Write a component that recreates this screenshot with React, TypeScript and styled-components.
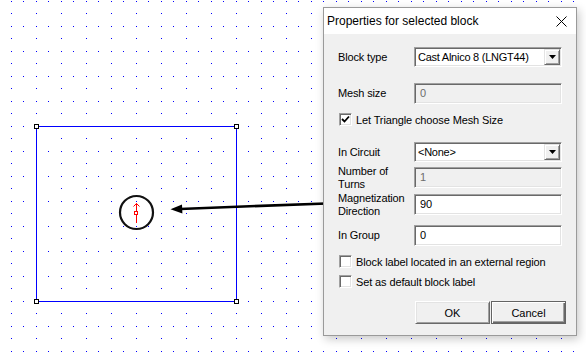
import React from 'react';
import styled, { createGlobalStyle, css } from 'styled-components';

const GlobalStyle = createGlobalStyle`
  html, body {
    margin: 0;
    padding: 0;
    background: #ffffff;
  }
`;

const uiFont = `"Liberation Sans", Arial, sans-serif`;

const Stage = styled.div`
  position: relative;
  width: 586px;
  height: 352px;
  overflow: hidden;
  background: #ffffff;
`;

const Board = styled.svg`
  display: block;
`;

const Dialog = styled.div`
  position: absolute;
  left: 323px;
  top: 7px;
  width: 254px;
  height: 329px;
  box-sizing: border-box;
  border: 1px solid #9a9a9a;
  background: #f0f0f0;
  box-shadow: 2px 3px 9px rgba(0, 0, 0, 0.22);
  display: flex;
  flex-direction: column;
  font-family: ${uiFont};
  color: #000;
`;

const TitleBar = styled.div`
  height: 26px;
  background: #ffffff;
  display: flex;
  align-items: center;
  justify-content: space-between;
  padding-left: 3px;
`;

const TitleText = styled.span`
  font-size: 12px;
`;

const CloseBox = styled.div`
  width: 30px;
  height: 26px;
  display: flex;
  align-items: center;
  justify-content: center;
`;

const Body = styled.div`
  display: flex;
  flex-direction: column;
  padding-left: 14px;
  font-size: 11px;
`;

const FieldRow = styled.div<{ $gap: number; $h: number }>`
  display: flex;
  align-items: center;
  margin-top: ${(p) => p.$gap}px;
  height: ${(p) => p.$h}px;
`;

const FieldLabel = styled.div`
  width: 76px;
  flex: none;
  line-height: 13px;
  letter-spacing: -0.15px;
`;

const sunken = css`
  box-sizing: border-box;
  border: 1px solid;
  border-color: #a0a0a0 #ffffff #ffffff #a0a0a0;
  box-shadow: inset 1px 1px #696969, inset -1px -1px #e3e3e3;
`;

const EditBox = styled.div<{ $disabled?: boolean }>`
  ${sunken};
  width: 148px;
  height: 21px;
  padding-left: 5px;
  line-height: 18px;
  background: ${(p) => (p.$disabled ? '#f0f0f0' : '#ffffff')};
  color: ${(p) => (p.$disabled ? '#6d6d6d' : '#000000')};
`;

const Combo = styled.div`
  ${sunken};
  width: 148px;
  height: 20px;
  padding: 1px;
  display: flex;
  background: #ffffff;
`;

const ComboText = styled.div`
  flex: 1;
  padding-left: 2px;
  line-height: 17px;
  letter-spacing: -0.25px;
  white-space: nowrap;
`;

const DropButton = styled.div`
  width: 16px;
  box-sizing: border-box;
  border: 1px solid;
  border-color: #e3e3e3 #696969 #696969 #e3e3e3;
  box-shadow: inset 1px 1px #ffffff, inset -1px -1px #a0a0a0;
  background: #f0f0f0;
  display: flex;
  align-items: center;
  justify-content: center;
`;

const CheckRow = styled.div<{ $gap: number }>`
  display: flex;
  align-items: center;
  margin-top: ${(p) => p.$gap}px;
  height: 13px;
  padding-left: 1px;
`;

const CheckBox = styled.div`
  ${sunken};
  width: 13px;
  height: 13px;
  background: #ffffff;
  display: flex;
  align-items: center;
  justify-content: center;
  flex: none;
`;

const CheckText = styled.span`
  margin-left: 4px;
  letter-spacing: -0.12px;
  white-space: nowrap;
`;

const ButtonRow = styled.div`
  display: flex;
  justify-content: flex-end;
  gap: 1px;
  margin-top: 13px;
  padding-right: 10px;
`;

const PushButton = styled.div<{ $default?: boolean }>`
  width: 75px;
  height: 23px;
  box-sizing: border-box;
  display: flex;
  align-items: center;
  justify-content: center;
  background: #f0f0f0;
  font-size: 11px;
  ${(p) =>
    p.$default
      ? css`
          border: 1px solid #646464;
          box-shadow: inset 1px 1px #ffffff, inset -1px -1px #696969, inset -2px -2px #a0a0a0;
        `
      : css`
          border: 1px solid;
          border-color: #ffffff #696969 #696969 #ffffff;
          box-shadow: inset 1px 1px #e3e3e3, inset -1px -1px #a0a0a0;
        `}
`;

const DownArrow = () => (
  <svg width="7" height="4" viewBox="0 0 7 4">
    <polygon points="0,0 7,0 3.5,4" fill="#000" />
  </svg>
);

const Tick = () => (
  <svg width="9" height="9" viewBox="0 0 9 9">
    <polyline points="1,4 3.5,6.5 8,1.5" fill="none" stroke="#000" strokeWidth="1.8" />
  </svg>
);

const Drawing = () => (
  <Board width="586" height="352" viewBox="0 0 586 352">
    <defs>
      <pattern id="dots" width="25" height="25" patternUnits="userSpaceOnUse">
        <rect x="11" y="1" width="1" height="1" fill="#0000ff" />
        <rect x="23" y="1" width="1" height="1" fill="#0000ff" />
        <rect x="11" y="13" width="1" height="1" fill="#0000ff" />
      </pattern>
    </defs>
    <rect width="586" height="352" fill="url(#dots)" shapeRendering="crispEdges" />
    <rect x="36.5" y="126.5" width="200" height="175" fill="none" stroke="#0000ff" strokeWidth="1" shapeRendering="crispEdges" />
    {[
      [36, 126],
      [236, 126],
      [36, 301],
      [236, 301],
    ].map(([x, y]) => (
      <rect key={`${x}-${y}`} x={x - 1.5} y={y - 1.5} width="4" height="4" fill="#fff" stroke="#000" strokeWidth="1" shapeRendering="crispEdges" />
    ))}
    <circle cx="136.5" cy="212.5" r="16.5" fill="none" stroke="#111" strokeWidth="2.2" />
    <line x1="136.5" y1="203.5" x2="136.5" y2="223" stroke="#ff0000" strokeWidth="1" />
    <polyline points="133.5,206.5 136.5,203.5 139.5,206.5" fill="none" stroke="#ff0000" strokeWidth="1" />
    <rect x="134.5" y="211.5" width="3" height="3" fill="#fff" stroke="#ff0000" strokeWidth="1" shapeRendering="crispEdges" />
    <line x1="180" y1="208.9" x2="340" y2="202.9" stroke="#000" strokeWidth="2.5" />
    <polygon points="170.5,209.3 182,204.6 182.4,213.6" fill="#000" />
  </Board>
);

export default function App() {
  return (
    <Stage>
      <GlobalStyle />
      <Drawing />
      <Dialog>
        <TitleBar>
          <TitleText>Properties for selected block</TitleText>
          <CloseBox>
            <svg width="11" height="11" viewBox="0 0 11 11">
              <path d="M0.5 0.5 L10.5 10.5 M10.5 0.5 L0.5 10.5" stroke="#000" strokeWidth="1" />
            </svg>
          </CloseBox>
        </TitleBar>
        <Body>
          <FieldRow $gap={13} $h={20}>
            <FieldLabel>Block type</FieldLabel>
            <Combo>
              <ComboText>Cast Alnico 8 (LNGT44)</ComboText>
              <DropButton>
                <DownArrow />
              </DropButton>
            </Combo>
          </FieldRow>
          <FieldRow $gap={16} $h={21}>
            <FieldLabel>Mesh size</FieldLabel>
            <EditBox $disabled>0</EditBox>
          </FieldRow>
          <CheckRow $gap={9}>
            <CheckBox>
              <Tick />
            </CheckBox>
            <CheckText>Let Triangle choose Mesh Size</CheckText>
          </CheckRow>
          <FieldRow $gap={16} $h={20}>
            <FieldLabel>In Circuit</FieldLabel>
            <Combo>
              <ComboText>&lt;None&gt;</ComboText>
              <DropButton>
                <DownArrow />
              </DropButton>
            </Combo>
          </FieldRow>
          <FieldRow $gap={5} $h={21}>
            <FieldLabel>
              Number of
              <br />
              Turns
            </FieldLabel>
            <EditBox $disabled>1</EditBox>
          </FieldRow>
          <FieldRow $gap={6} $h={21}>
            <FieldLabel>
              Magnetization
              <br />
              Direction
            </FieldLabel>
            <EditBox>90</EditBox>
          </FieldRow>
          <FieldRow $gap={10} $h={21}>
            <FieldLabel>In Group</FieldLabel>
            <EditBox>0</EditBox>
          </FieldRow>
          <CheckRow $gap={9}>
            <CheckBox />
            <CheckText>Block label located in an external region</CheckText>
          </CheckRow>
          <CheckRow $gap={7}>
            <CheckBox />
            <CheckText>Set as default block label</CheckText>
          </CheckRow>
          <ButtonRow>
            <PushButton>OK</PushButton>
            <PushButton $default>Cancel</PushButton>
          </ButtonRow>
        </Body>
      </Dialog>
    </Stage>
  );
}
